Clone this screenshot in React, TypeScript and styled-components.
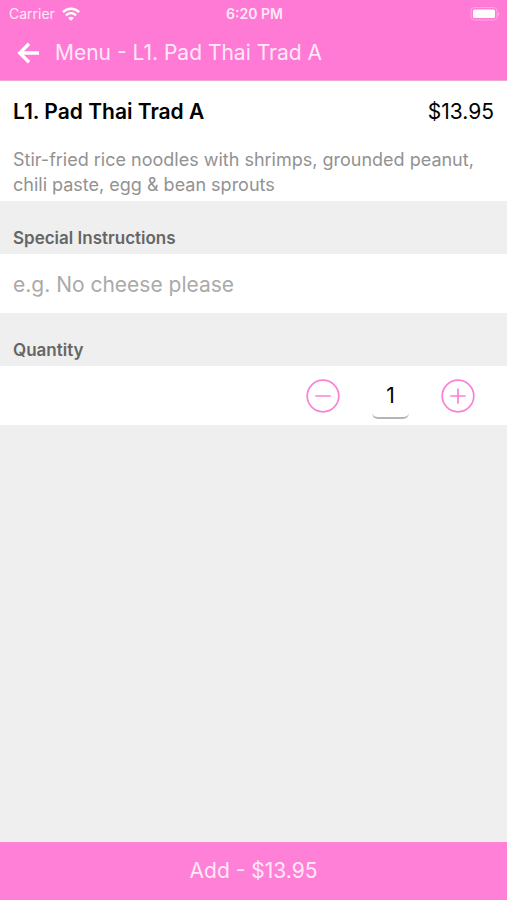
import React, { useState } from "react";
import styled, { createGlobalStyle } from "styled-components";

const pink = "#ff7ad5";

const GlobalStyle = createGlobalStyle`
  *, *::before, *::after { box-sizing: border-box; }
  body {
    margin: 0;
    background: #efefef;
    font-family: Inter, "Liberation Sans", sans-serif;
    color: #000;
  }
  button, input { font: inherit; color: inherit; border: 0; margin: 0; padding: 0; background: none; border-radius: 0; }
  button { cursor: pointer; }
  h1, h2, p { margin: 0; }
`;

const Screen = styled.div`
  min-height: 100vh;
  display: flex;
  flex-direction: column;
  background: #efefef;
`;

const Header = styled.header`
  background: ${pink};
  color: #ffe9f8;
  border-bottom: 1px solid #f0a5d5;
`;

const StatusBar = styled.div`
  display: grid;
  grid-template-columns: 1fr auto 1fr;
  align-items: center;
  height: 28px;
  padding: 0 7px 0 9px;
  font-size: 14px;
  line-height: 20px;
`;

const Carrier = styled.span`
  display: flex;
  align-items: center;
  gap: 7px;
`;

const Clock = styled.time`
  font-weight: 600;
`;

const Battery = styled.svg`
  justify-self: end;
`;

const NavBar = styled.div`
  display: flex;
  align-items: center;
  gap: 15px;
  height: 52px;
  padding: 0 17px 2px;
`;

const BackButton = styled.button`
  display: flex;
`;

const NavTitle = styled.h1`
  font-size: 21px;
  line-height: 28px;
  font-weight: 400;
`;

const Item = styled.section`
  padding: 17px 13px 4px;
  background: #fff;
`;

const ItemHeading = styled.div`
  display: flex;
  justify-content: space-between;
  font-size: 21px;
  line-height: 28px;
`;

const ItemName = styled.h2`
  font-size: inherit;
  font-weight: 600;
`;

const Description = styled.p`
  padding-top: 21px;
  color: #929292;
  font-size: 18px;
  line-height: 25px;
`;

const SectionLabel = styled.label`
  display: block;
  padding: 25px 13px 4px;
  color: #666;
  font-size: 17px;
  line-height: 24px;
  font-weight: 600;
`;

const Instructions = styled.input`
  display: block;
  width: 100%;
  height: 59px;
  padding: 2px 13px 0;
  background: #fff;
  font-size: 21px;
  &::placeholder { color: #aaa; opacity: 1; }
`;

const QuantityRow = styled.div`
  display: flex;
  justify-content: flex-end;
  align-items: center;
  gap: 32px;
  height: 59px;
  padding: 0 32px;
  background: #fff;
`;

const StepButton = styled.button`
  display: flex;
`;

const QuantityInput = styled.input`
  width: 37px;
  height: 46px;
  padding-top: 2px;
  text-align: center;
  font-size: 21px;
  border-bottom: 2px solid #b5b5b5;
  border-radius: 6px;
`;

const AddButton = styled.button`
  margin-top: auto;
  height: 58px;
  background: #ff80d7;
  color: #ffe9f8;
  font-size: 21px;
  line-height: 28px;
`;

function StepIcon({ plus = false }: { plus?: boolean }) {
  return (
    <svg width="34" height="34" viewBox="0 0 34 34" fill="none" stroke="#fa82d6" strokeWidth="1.7" strokeLinecap="round" aria-hidden="true">
      <circle cx="17" cy="17" r="15.8" />
      <path d={plus ? "M10 17h14M17 10v14" : "M10 17h14"} />
    </svg>
  );
}

export default function App() {
  const [quantity, setQuantity] = useState(1);
  const total = (quantity * 13.95).toFixed(2);

  return (
    <Screen>
      <GlobalStyle />
      <Header>
        <StatusBar>
          <Carrier>
            Carrier
            <svg width="18" height="14" viewBox="0 0 18 14" fill="none" stroke="#fff" strokeWidth="2.5" aria-label="Wi-Fi">
              <path d="M.9 5.2C5.4.5 12.6.5 17.1 5.2" />
              <path d="M4 8.4c2.9-2.8 7.1-2.8 10 0" />
              <path d="M9 13.8 6.1 10.9c1.7-1.5 4.1-1.5 5.8 0Z" fill="#fff" stroke="none" />
            </svg>
          </Carrier>
          <Clock>6:20 PM</Clock>
          <Battery width="30" height="14" viewBox="0 0 30 14" aria-label="Battery full">
            <rect x="1" y="0.5" width="26" height="12.5" rx="3.5" fill="none" stroke="#ffa6e3" />
            <rect x="3" y="2.5" width="22" height="8.5" rx="1.5" fill="#fff" />
            <path d="M28 5v4c1.6-.7 1.6-3.3 0-4Z" fill="#ffb1e7" />
          </Battery>
        </StatusBar>
        <NavBar>
          <BackButton aria-label="Back">
            <svg width="23" height="22" viewBox="0 0 23 22" fill="none" stroke="#fff" strokeWidth="3.4" aria-hidden="true">
              <path d="M22 11H3.5M12 1.8 2.8 11l9.2 9.2" />
            </svg>
          </BackButton>
          <NavTitle>Menu - L1. Pad Thai Trad A</NavTitle>
        </NavBar>
      </Header>
      <Item>
        <ItemHeading>
          <ItemName>L1. Pad Thai Trad A</ItemName>
          <span>$13.95</span>
        </ItemHeading>
        <Description>
          Stir-fried rice noodles with shrimps, grounded peanut, chili paste, egg &amp; bean sprouts
        </Description>
      </Item>
      <SectionLabel htmlFor="instructions">Special Instructions</SectionLabel>
      <Instructions id="instructions" type="text" placeholder="e.g. No cheese please" />
      <SectionLabel htmlFor="quantity">Quantity</SectionLabel>
      <QuantityRow>
        <StepButton aria-label="Decrease quantity" onClick={() => setQuantity(Math.max(1, quantity - 1))}>
          <StepIcon />
        </StepButton>
        <QuantityInput
          id="quantity"
          inputMode="numeric"
          value={quantity}
          onChange={(e) => setQuantity(Math.max(1, Number(e.target.value) || 1))}
        />
        <StepButton aria-label="Increase quantity" onClick={() => setQuantity(quantity + 1)}>
          <StepIcon plus />
        </StepButton>
      </QuantityRow>
      <AddButton>Add - ${total}</AddButton>
    </Screen>
  );
}
